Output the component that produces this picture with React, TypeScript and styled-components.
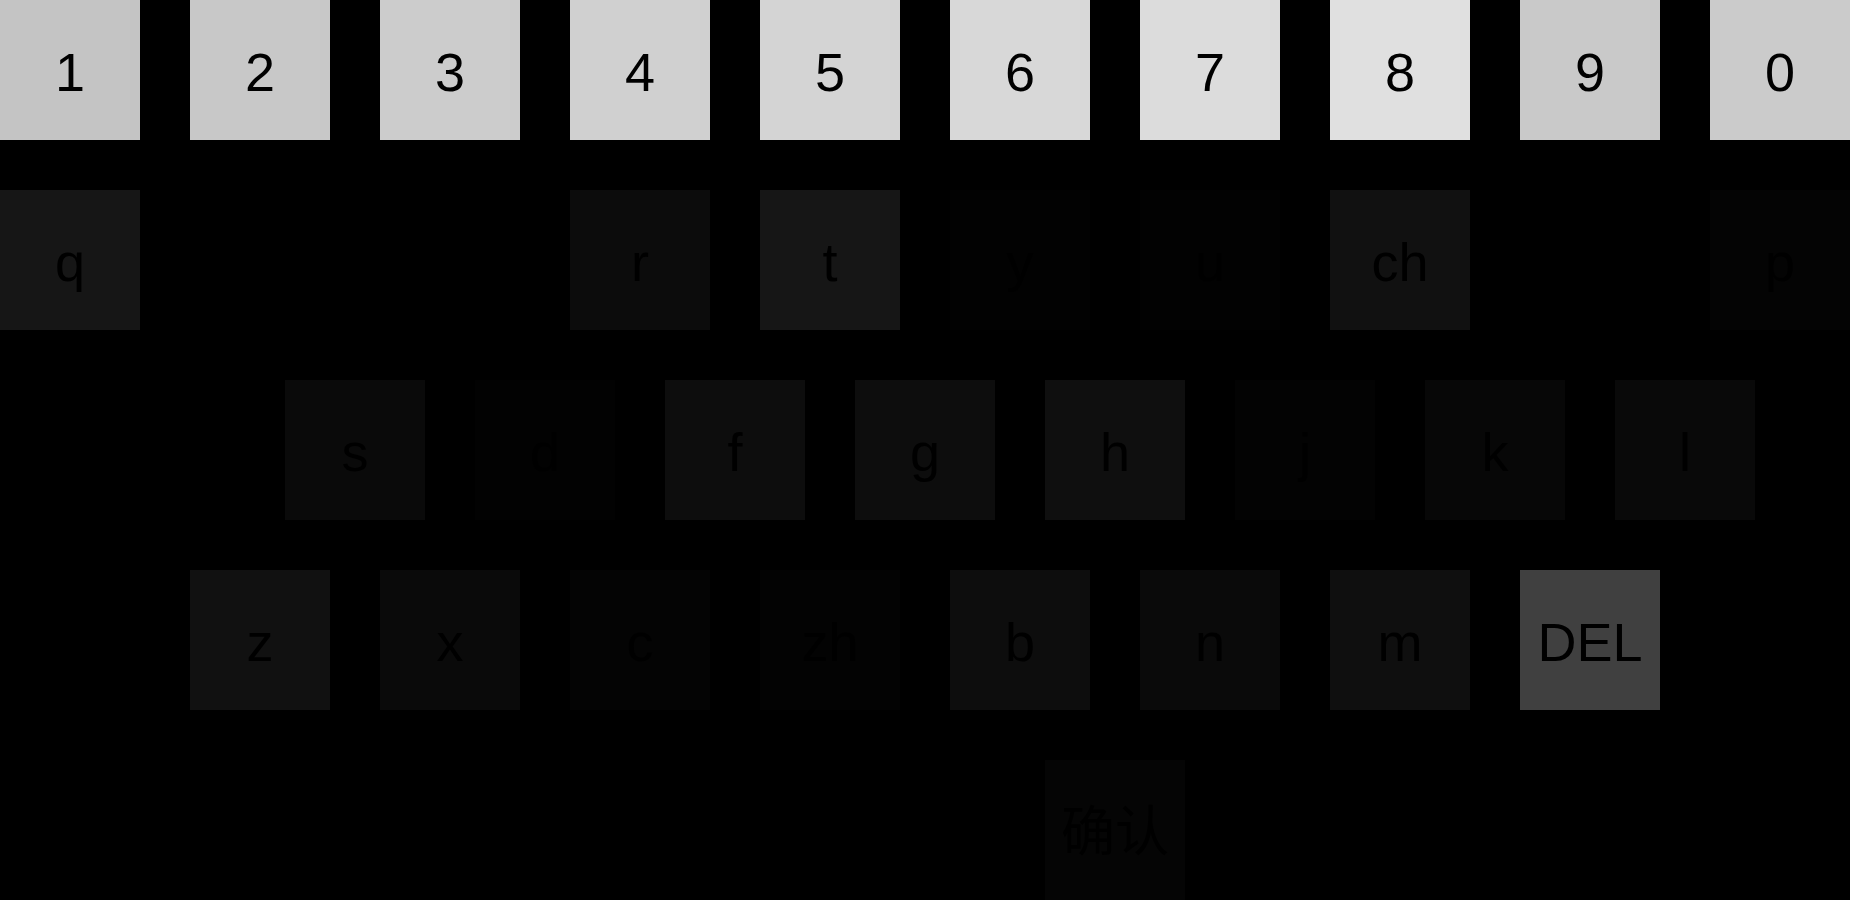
import React from "react";
import styled, { createGlobalStyle } from "styled-components";

const Global = createGlobalStyle`
  html, body {
    margin: 0;
    padding: 0;
    background: #000;
  }
  body {
    font-family: "Liberation Sans", Arial, "Noto Sans CJK SC", sans-serif;
  }
`;

const Board = styled.div`
  display: flex;
  flex-direction: column;
  gap: 50px;
  width: 1850px;
  height: 900px;
  background: #000;
  overflow: hidden;
`;

const Row = styled.div<{ $indent: number }>`
  display: flex;
  gap: 50px;
  padding-left: ${(p) => p.$indent}px;
  height: 140px;
`;

const Key = styled.div<{ $bg: string }>`
  flex: 0 0 140px;
  box-sizing: border-box;
  width: 140px;
  height: 140px;
  padding-top: 4px;
  background: ${(p) => p.$bg};
  color: #000;
  display: flex;
  align-items: center;
  justify-content: center;
  font-family: "Liberation Sans", Arial, "Noto Sans CJK SC", sans-serif;
  font-size: 54px;
  line-height: 1;
  user-select: none;
`;

type K = [string, string];

const rows: { indent: number; keys: K[] }[] = [
  {
    indent: 0,
    keys: [
      ["1", "#c4c4c4"],
      ["2", "#c8c8c8"],
      ["3", "#cccccc"],
      ["4", "#d0d0d0"],
      ["5", "#d4d4d4"],
      ["6", "#d8d8d8"],
      ["7", "#dcdcdc"],
      ["8", "#e0e0e0"],
      ["9", "#c9c9c9"],
      ["0", "#cbcbcb"],
    ],
  },
  {
    indent: 0,
    keys: [
      ["q", "#161616"],
      ["w", "#000000"],
      ["e", "#000000"],
      ["r", "#0c0c0c"],
      ["t", "#161616"],
      ["y", "#020202"],
      ["u", "#020202"],
      ["ch", "#111111"],
      ["o", "#000000"],
      ["p", "#040404"],
    ],
  },
  {
    indent: 95,
    keys: [
      ["a", "#000000"],
      ["s", "#0a0a0a"],
      ["d", "#020202"],
      ["f", "#0d0d0d"],
      ["g", "#0d0d0d"],
      ["h", "#0f0f0f"],
      ["j", "#030303"],
      ["k", "#070707"],
      ["l", "#090909"],
    ],
  },
  {
    indent: 190,
    keys: [
      ["z", "#111111"],
      ["x", "#0a0a0a"],
      ["c", "#040404"],
      ["zh", "#030303"],
      ["b", "#0d0d0d"],
      ["n", "#0a0a0a"],
      ["m", "#0f0f0f"],
      ["DEL", "#404040"],
    ],
  },
  {
    indent: 1045,
    keys: [["确认", "#050505"]],
  },
];

export default function App() {
  return (
    <>
      <Global />
      <Board>
        {rows.map((r, i) => (
          <Row key={i} $indent={r.indent}>
            {r.keys.map(([label, bg]) => (
              <Key key={label} $bg={bg}>
                {label}
              </Key>
            ))}
          </Row>
        ))}
      </Board>
    </>
  );
}
